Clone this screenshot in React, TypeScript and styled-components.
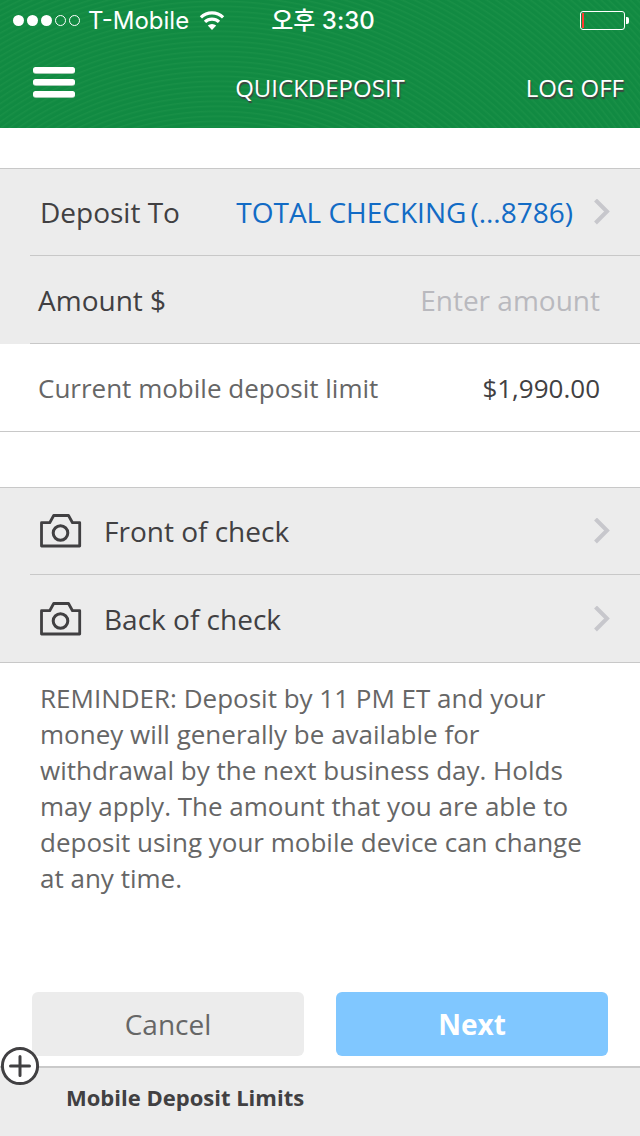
import React from 'react';
import styled, { createGlobalStyle } from 'styled-components';

const GlobalStyle = createGlobalStyle`
  *, *::before, *::after { box-sizing: border-box; }
  body {
    margin: 0;
    background: #fff;
    color: #414042;
    font-family: "Open Sans", "Noto Sans", "Noto Sans CJK KR", sans-serif;
  }
  button, input { font: inherit; color: inherit; margin: 0; }
  button { border: 0; padding: 0; background: none; cursor: pointer; }
`;

const Page = styled.div`
  min-height: 100vh;
  display: flex;
  flex-direction: column;
`;

const Header = styled.header`
  height: 128px;
  color: #fff;
  background: repeating-radial-gradient(circle at 34% 420px, #118a42 0, #118a42 2px, #199047 4px, #118a42 5px);
`;

const StatusBar = styled.div`
  height: 40px;
  padding: 0 11px 0 13px;
  display: grid;
  grid-template-columns: 1fr auto 1fr;
  align-items: center;
  font-family: Inter, "Noto Sans CJK KR", sans-serif;
  font-size: 24px;
  line-height: 32px;
`;

const Carrier = styled.div`
  display: flex;
  align-items: center;
  gap: 8px;
`;

const CarrierName = styled.span`
  padding: 2px 2px 0 0;
`;

const Clock = styled.time`
  padding: 2px 0 0 4px;
  font-weight: 500;
`;

const BatterySlot = styled.div`
  display: flex;
  justify-content: flex-end;
`;

const NavBar = styled.div`
  height: 88px;
  padding: 8px 16px 0;
  display: grid;
  grid-template-columns: 1fr auto 1fr;
  align-items: center;
  text-shadow: 1px 2px 1px #414042;
  font-size: 24px;
  line-height: 32px;
`;

const MenuButton = styled.button`
  justify-self: start;
  display: flex;
  margin-left: 16px;
  padding-bottom: 12px;
`;

const Title = styled.h1`
  margin: 0;
  font-size: 24px;
  font-weight: 400;
`;

const LogOff = styled.button`
  justify-self: end;
  text-shadow: inherit;
`;

const Main = styled.main`
  padding-top: 40px;
  display: flex;
  flex-direction: column;
`;

const Group = styled.section<{ $gap: number }>`
  margin-bottom: ${p => p.$gap}px;
`;

const Row = styled.div<{ $plain?: boolean }>`
  height: 88px;
  padding-left: 30px;
  background: ${p => (p.$plain ? '#fff' : '#ececec')};
  &:first-child { border-top: 1px solid #c8c8c8; }
  &:last-child { border-bottom: 1px solid #c8c8c8; }
`;

const RowInner = styled.div<{ $line?: boolean }>`
  height: 100%;
  padding: 0 40px 0 8px;
  display: flex;
  align-items: center;
  justify-content: space-between;
  font-size: 28px;
  border-bottom: ${p => (p.$line ? '1px solid #c8c8c8' : '0')};
`;

const RowButton = styled(RowInner).attrs({ as: 'button', type: 'button' })`
  width: 100%;
  padding: 0 30px 0 10px;
  text-align: left;
`;

const Account = styled.span`
  margin-left: auto;
  margin-right: 20px;
  display: flex;
  gap: 4px;
  color: #126bc5;
`;

const AmountInput = styled.input`
  min-width: 0;
  flex: 1;
  border: 0;
  padding: 0;
  background: none;
  outline: none;
  text-align: right;
  &::placeholder { color: #b9b9be; opacity: 1; }
`;

const LimitLabel = styled.span`
  font-size: 26px;
  color: #666;
`;

const LimitValue = styled.span`
  font-size: 26px;
`;

const CheckLabel = styled.span`
  flex: 1;
  margin-left: 22px;
`;

const Reminder = styled.p`
  margin: 0 40px 96px;
  font-size: 26px;
  line-height: 36px;
  color: #666;
`;

const Actions = styled.div`
  padding: 0 32px;
  display: grid;
  grid-template-columns: 1fr 1fr;
  gap: 32px;
`;

const ActionButton = styled.button<{ $primary?: boolean }>`
  height: 64px;
  border-radius: 6px;
  font-size: 28px;
  font-weight: ${p => (p.$primary ? 700 : 400)};
  color: ${p => (p.$primary ? '#fff' : '#666')};
  background: ${p => (p.$primary ? '#80c7ff' : '#ececec')};
`;

const Footer = styled.footer`
  flex: 1;
  margin-top: 10px;
  border-top: 2px solid #cacaca;
  background: #ececec;
`;

const LimitsToggle = styled.button`
  position: relative;
  width: 100%;
  padding: 13px 66px 22px;
  text-align: left;
  font-size: 22px;
  line-height: 32px;
  font-weight: 700;
`;

const PlusIcon = styled.svg`
  position: absolute;
  left: 0;
  top: -22px;
`;

const SignalDots = () => (
  <svg width="67" height="12" viewBox="0 0 67 12" aria-hidden="true">
    {[0, 1, 2, 3, 4].map(i => (
      <circle key={i} cx={5.5 + i * 14} cy="6.5" r={i < 3 ? 5.5 : 5} fill={i < 3 ? '#fff' : 'none'} stroke={i < 3 ? 'none' : '#fff'} />
    ))}
  </svg>
);

const Wifi = () => (
  <svg width="26" height="19" viewBox="0 0 26 19" fill="none" stroke="#fff" strokeWidth="3.2" aria-hidden="true">
    <path d="M1.9 6.3a16 16 0 0 1 22.2 0" />
    <path d="M6 10.9a10 10 0 0 1 14 0" />
    <path d="M13 19l-4.2-4.4a6 6 0 0 1 8.4 0z" fill="#fff" stroke="none" />
  </svg>
);

const Battery = () => (
  <svg width="49" height="19" viewBox="0 0 49 19" aria-hidden="true">
    <rect x="0.5" y="0.5" width="44" height="18" rx="2.5" fill="none" stroke="#fff" />
    <rect x="2" y="2" width="2" height="15" fill="#ff3b30" />
    <path d="M46 6h1a2 2 0 0 1 2 2v3a2 2 0 0 1-2 2h-1z" fill="#fff" />
  </svg>
);

const MenuIcon = () => (
  <svg width="44" height="32" viewBox="0 0 44 32" aria-hidden="true">
    {[1, 13, 25].map(y => (
      <g key={y}>
        <rect x="1" y={y + 1} width="42" height="6" rx="3" fill="#a5c9b3" />
        <rect x="1" y={y} width="42" height="6" rx="2.5" fill="#fff" />
      </g>
    ))}
  </svg>
);

const Chevron = () => (
  <svg width="17" height="26" viewBox="0 0 17 26" fill="none" stroke="#c7c7cc" strokeWidth="4" aria-hidden="true">
    <path d="M2.5 1L14 12.5 2.5 24" />
  </svg>
);

const Camera = () => (
  <svg width="42" height="34" viewBox="0 0 42 34" fill="none" stroke="#414042" strokeWidth="2.8" strokeLinejoin="round" aria-hidden="true">
    <path d="M1.5 8.7h8.2l4-7.2h14.8l4 7.2h7.2v23.3H1.5z" />
    <circle cx="20.5" cy="19" r="7.3" strokeWidth="3" />
  </svg>
);

const CheckRow = ({ label, line }: { label: string; line?: boolean }) => (
  <Row>
    <RowButton $line={line}>
      <Camera />
      <CheckLabel>{label}</CheckLabel>
      <Chevron />
    </RowButton>
  </Row>
);

export default function App() {
  return (
    <>
      <GlobalStyle />
      <Page>
        <Header>
          <StatusBar>
            <Carrier>
              <SignalDots />
              <CarrierName>T-Mobile</CarrierName>
              <Wifi />
            </Carrier>
            <Clock dateTime="15:30">오후 3:30</Clock>
            <BatterySlot><Battery /></BatterySlot>
          </StatusBar>
          <NavBar>
            <MenuButton type="button" aria-label="Menu"><MenuIcon /></MenuButton>
            <Title>QUICKDEPOSIT</Title>
            <LogOff type="button">LOG OFF</LogOff>
          </NavBar>
        </Header>
        <Main>
          <Group $gap={55}>
            <Row>
              <RowButton $line>
                <span>Deposit To</span>
                <Account><span>TOTAL CHECKING</span><span>(...8786)</span></Account>
                <Chevron />
              </RowButton>
            </Row>
            <Row>
              <RowInner $line>
                <label htmlFor="amount">Amount $</label>
                <AmountInput id="amount" inputMode="decimal" placeholder="Enter amount" />
              </RowInner>
            </Row>
            <Row $plain>
              <RowInner>
                <LimitLabel>Current mobile deposit limit</LimitLabel>
                <LimitValue>$1,990.00</LimitValue>
              </RowInner>
            </Row>
          </Group>
          <Group $gap={17}>
            <CheckRow label="Front of check" line />
            <CheckRow label="Back of check" />
          </Group>
          <Reminder>
            REMINDER: Deposit by 11 PM ET and your money will generally be available for withdrawal by the next
            business day. Holds may apply. The amount that you are able to deposit using your mobile device can
            change at any time.
          </Reminder>
          <Actions>
            <ActionButton type="button">Cancel</ActionButton>
            <ActionButton type="button" $primary>Next</ActionButton>
          </Actions>
        </Main>
        <Footer>
          <LimitsToggle type="button" aria-expanded={false}>
            <PlusIcon width="40" height="40" viewBox="0 0 40 40" aria-hidden="true">
              <circle cx="20" cy="20" r="17.6" fill="#fff" stroke="#414042" strokeWidth="3" />
              <path d="M20 10.5v19M10.5 20h19" stroke="#414042" strokeWidth="3" strokeLinecap="round" />
            </PlusIcon>
            Mobile Deposit Limits
          </LimitsToggle>
        </Footer>
      </Page>
    </>
  );
}
